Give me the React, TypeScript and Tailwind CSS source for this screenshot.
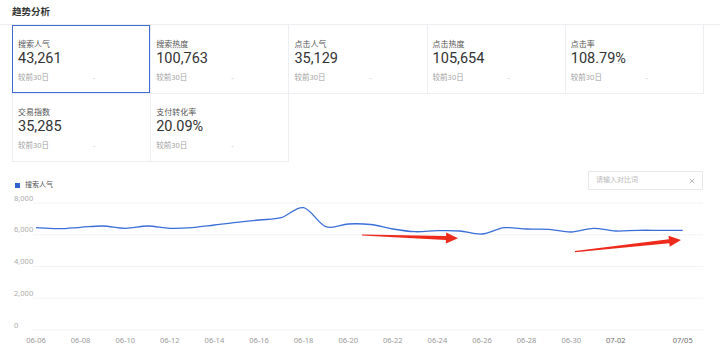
import { X } from 'lucide-react'

const metrics = [
  { label: '搜索人气', value: '43,261', active: true },
  { label: '搜索热度', value: '100,763' },
  { label: '点击人气', value: '35,129' },
  { label: '点击热度', value: '105,654' },
  { label: '点击率', value: '108.79%' },
  { label: '交易指数', value: '35,285' },
  { label: '支付转化率', value: '20.09%' },
]

// screen y of each day, 06-06 .. 07-05
const series = [
  227.7, 228.7, 227.3, 226, 228.3, 226, 228.3, 227.7, 225, 222.3, 220, 217.7, 207.7, 226.7, 224,
  224.5, 229, 231.7, 230.7, 231, 234, 227.7, 229, 229.3, 232, 228.3, 231, 230.3, 230.3, 230.3,
]

const TOP = 190
const dayX = (i: number) => 36 + 22.3 * i

function smoothPath(pts: [number, number][]) {
  let d = `M${pts[0][0]},${pts[0][1]}`
  for (let i = 0; i < pts.length - 1; i++) {
    const p0 = pts[i - 1] || pts[i]
    const p1 = pts[i]
    const p2 = pts[i + 1]
    const p3 = pts[i + 2] || p2
    const c1x = p1[0] + (p2[0] - p0[0]) / 6
    const c1y = p1[1] + (p2[1] - p0[1]) / 6
    const c2x = p2[0] - (p3[0] - p1[0]) / 6
    const c2y = p2[1] - (p3[1] - p1[1]) / 6
    d += ` C${c1x.toFixed(1)},${c1y.toFixed(1)} ${c2x.toFixed(1)},${c2y.toFixed(1)} ${p2[0].toFixed(1)},${p2[1].toFixed(1)}`
  }
  return d
}

const xLabels = [
  { i: 0, t: '06-06' },
  { i: 2, t: '06-08' },
  { i: 4, t: '06-10' },
  { i: 6, t: '06-12' },
  { i: 8, t: '06-14' },
  { i: 10, t: '06-16' },
  { i: 12, t: '06-18' },
  { i: 14, t: '06-20' },
  { i: 16, t: '06-22' },
  { i: 18, t: '06-24' },
  { i: 20, t: '06-26' },
  { i: 22, t: '06-28' },
  { i: 24, t: '06-30' },
  { i: 26, t: '07-02', dark: true },
  { i: 29, t: '07/05', dark: true },
]

const yLabels = ['8,000', '6,000', '4,000', '2,000', '0']

function MetricCell({ label, value, active }: { label: string; value: string; active?: boolean }) {
  return (
    <div className="relative h-[69px] border-r border-b border-[#eceef1] pl-[5px] pt-[13px] [&:nth-child(n+6)]:h-[68px] [&:nth-child(n+6)]:pt-[12px]">
      {active && <div className="absolute -left-px top-0 right-0 bottom-0 border border-[#3a6cd2]" />}
      <div className="text-[8px] leading-[11px] text-[#555]">{label}</div>
      <div className="mt-px font-[Roboto,sans-serif] text-[14.5px] leading-[18px] text-[#333]">{value}</div>
      <div className="mt-[4px] flex text-[7.5px] leading-[10px] text-[#a3a3a3]">
        <span className="w-[75px]">较前30日</span>
        <span className="text-[#c4c4c4]">-</span>
      </div>
    </div>
  )
}

export default function App() {
  const pts = series.map((y, i) => [dayX(i), y - TOP] as [number, number])

  return (
    <div
      className="h-[352px] w-[720px] overflow-hidden bg-white"
      style={{ fontFamily: '"Noto Sans", "Noto Sans CJK SC", sans-serif' }}
    >
      {/* Title */}
      <div className="flex h-[25px] items-center border-b border-[#eceef1] pl-3">
        <h1 className="text-[9.5px] font-bold text-[#333]">趋势分析</h1>
      </div>

      {/* Metric grid */}
      <div className="ml-3 grid w-[692px] grid-cols-5 border-l border-[#eceef1]">
        {metrics.map((m) => (
          <MetricCell key={m.label} {...m} />
        ))}
      </div>

      {/* Chart header */}
      <div className="mt-[9px] flex items-start justify-between pl-[15px] pr-[17px]">
        <div className="flex items-center gap-[5px] pt-[10px]">
          <span className="h-[5px] w-[5px] bg-[#2f63d0]" />
          <span className="text-[7px] leading-[8px] text-[#555]">搜索人气</span>
        </div>
        <div className="flex h-[19px] w-[115px] items-center justify-between border border-[#e8e8e8] pl-[7px] pr-[6px]">
          <span className="text-[7px] text-[#b8b8b8]">请输入对比词</span>
          <X className="h-[8px] w-[8px] text-[#777]" strokeWidth={1.5} />
        </div>
      </div>

      {/* Chart */}
      <svg width={720} height={162} className="block" style={{ fontFamily: '"Noto Sans", sans-serif' }}>
        {yLabels.map((t, k) => {
          const y = 13 + 31.75 * k
          return (
            <g key={t}>
              <line x1={33} x2={703} y1={y} y2={y} stroke="#f3f3f3" strokeWidth={1} />
              <text x={14} y={y - 2.5} fontSize={7.5} fill="#aaa">
                {t}
              </text>
            </g>
          )
        })}
        {xLabels.map((l) => (
          <text
            key={l.t}
            x={dayX(l.i)}
            y={152.5}
            fontSize={7.5}
            textAnchor="middle"
            fill={l.dark ? '#6b6b6b' : '#999'}
          >
            {l.t}
          </text>
        ))}
        <path d={smoothPath(pts)} fill="none" stroke="#3b6fd8" strokeWidth={1.3} />

        {/* red arrows */}
        <polygon
          points="362.02,44.4 446.07,45.9 446.17,42.4 458,48.3 445.83,53.4 445.93,49.9 361.98,45.6"
          fill="#ee2a1c"
        />
        <polygon
          points="574.93,61.1 668.9,49.3 668.5,45.8 681,50 669.7,56.8 669.3,53.3 575.07,62.3"
          fill="#ee2a1c"
        />
      </svg>
    </div>
  )
}
